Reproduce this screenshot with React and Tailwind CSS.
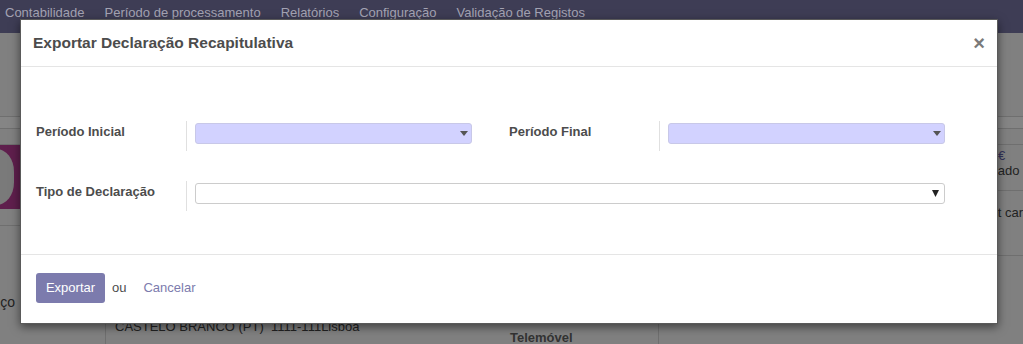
import React from "react";

function Caret() {
  return (
    <svg width="8" height="5" viewBox="0 0 8 5">
      <path d="M0 0 H8 L4 5 Z" fill="#555" />
    </svg>
  );
}

function Sep() {
  return <div className="w-px self-stretch bg-[#e0e0e0] mr-[8px]" />;
}

export default function App() {
  const font = { fontFamily: "'Liberation Sans', Arial, sans-serif" };
  return (
    <div className="relative w-[1023px] h-[344px] overflow-hidden bg-[#808080]" style={font}>
      {/* dimmed background page */}
      <div className="h-[33px] bg-[#3e3d55] flex items-start pt-[3px] gap-[20px] pl-[5px] text-[13px] text-[#a4a3b3]">
        <span>Contabilidade</span>
        <span>Período de processamento</span>
        <span>Relatórios</span>
        <span>Configuração</span>
        <span>Validação de Registos</span>
      </div>
      <div className="h-[84px] border-b border-[#6f6f6f]" />
      <div className="h-[12px] bg-[#858585] border-b border-[#6f6f6f]" />
      <div className="h-[16px] border-b border-[#6f6f6f]" />
      <div className="flex h-[177px]">
        <div className="w-[106px] flex flex-col">
          <div className="h-[64px] bg-[#5f1f4d] relative overflow-hidden">
            <div className="absolute left-[-30px] top-[4px] w-[44px] h-[56px] rounded-[40%] bg-[#7a7a7a]" />
          </div>
          <div className="h-[17px] border-b border-[#6f6f6f]" />
          <div className="flex-1 flex items-end pb-[9px]">
            <div className="w-[15px] flex justify-end whitespace-nowrap text-[14px] text-[#222]">Endereço</div>
          </div>
        </div>
        <div className="flex-1 flex justify-end">
          <div className="w-[25px] flex flex-col text-[13px] text-[#222] leading-[15px] overflow-hidden">
            <div className="pt-[3px] text-[#33335a]">€</div>
            <div className="flex justify-end w-[25px] whitespace-nowrap"><span className="shrink-0">Registrado&nbsp;</span></div>
            <div className="h-[13px] border-b border-[#6f6f6f]" />
            <div className="mt-[14px] flex justify-end whitespace-nowrap"><span className="shrink-0">Credit car</span></div>
            <div className="mt-[35px] border-b border-[#6f6f6f]" />
          </div>
        </div>
      </div>
      <div className="flex h-[22px]">
        <div className="w-[106px] border-r border-[#6f6f6f]" />
        <div className="w-[553px] border-r border-[#6f6f6f] relative text-[13px] text-[#222]">
          <div className="absolute left-[9px] top-[-5px] whitespace-nowrap">CASTELO BRANCO (PT)&nbsp;&nbsp;1111-111Lisboa</div>
          <div className="absolute left-[404px] top-[6px] text-[13px] font-bold text-[#333]">Telemóvel</div>
        </div>
        <div className="flex-1" />
      </div>

      {/* modal */}
      <div className="absolute left-[20px] top-[19px] w-[978px] h-[305px] bg-white border border-[#5a5a5a] shadow-[0_3px_9px_rgba(0,0,0,0.5)] flex flex-col">
        <div className="h-[47px] border-b border-[#e5e5e5] flex items-center justify-between pl-[12px] pr-[12px]">
          <span className="text-[15.5px] font-bold text-[#4c4c4c]">Exportar Declaração Recapitulativa</span>
          <span className="text-[20px] font-bold text-[#7a7a7a] leading-none">×</span>
        </div>
        <div className="flex-1 flex flex-col pt-[54px] pl-[15px] pr-[52px] gap-[30px]">
          <div className="flex h-[30px]">
            <div className="w-[150px] text-[13px] font-bold text-[#4c4c4c] pt-[1px]">Período Inicial</div>
            <Sep />
            <div className="w-[277px] h-[21px] mt-[2px] rounded-[3px] bg-[#d2d2ff] border border-[#c8c8e8] flex items-center justify-end pr-[3px]">
              <Caret />
            </div>
            <div className="w-[37px]" />
            <div className="w-[150px] text-[13px] font-bold text-[#4c4c4c] pt-[1px]">Período Final</div>
            <Sep />
            <div className="flex-1 h-[21px] mt-[2px] rounded-[3px] bg-[#d2d2ff] border border-[#c8c8e8] flex items-center justify-end pr-[3px]">
              <Caret />
            </div>
          </div>
          <div className="flex h-[30px]">
            <div className="w-[150px] text-[13px] font-bold text-[#4c4c4c] pt-[1px]">Tipo de Declaração</div>
            <Sep />
            <div className="flex-1 h-[21px] mt-[2px] rounded-[3px] bg-white border border-[#cccccc] flex items-center justify-end pr-[5px]">
              <svg width="7" height="7" viewBox="0 0 7 7"><path d="M0 0 H7 L3.5 7 Z" fill="#222" /></svg>
            </div>
          </div>
        </div>
        <div className="h-[69px] border-t border-[#e5e5e5] flex items-center pl-[15px] pb-[3px] text-[13px]">
          <button className="w-[69px] h-[30px] rounded-[3px] bg-[#7c7bad] text-white text-[13px]">Exportar</button>
          <span className="ml-[7px] text-[#4c4c4c]">ou</span>
          <span className="ml-[17px] text-[#7c7bad]">Cancelar</span>
        </div>
      </div>
    </div>
  );
}
